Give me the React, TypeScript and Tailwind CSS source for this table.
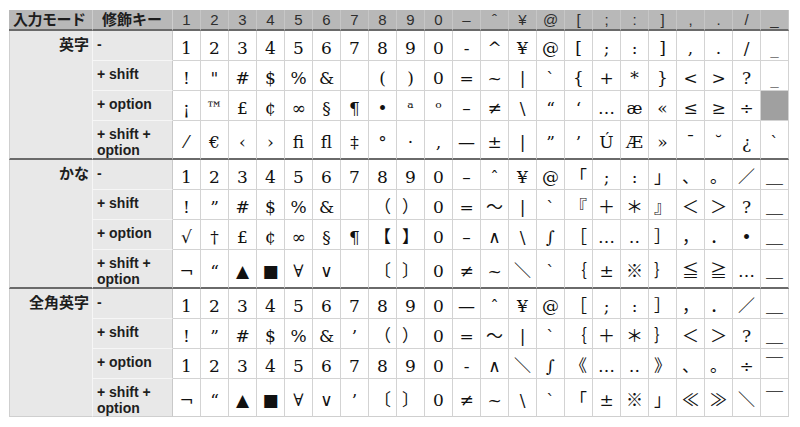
import React from 'react';

const keys = ['1', '2', '3', '4', '5', '6', '7', '8', '9', '0', '–', 'ˆ', '¥', '@', '[', ';', ':', ']', ',', '.', '/', '_'];

const mods = ['-', '+ shift', '+ option', '+ shift +\noption'];

const GRAY = '#gray';

const groups: { mode: string; rows: string[][] }[] = [
  {
    mode: '英字',
    rows: [
      ['1', '2', '3', '4', '5', '6', '7', '8', '9', '0', '-', '^', '¥', '@', '[', ';', ':', ']', ',', '.', '/', '_'],
      ['!', '"', '#', '$', '%', '&', '', '(', ')', '0', '=', '~', '|', '`', '{', '+', '*', '}', '<', '>', '?', '_'],
      ['¡', '™', '£', '¢', '∞', '§', '¶', '•', 'ᵃ', 'ᵒ', '–', '≠', '\\', '“', '‘', '…', 'æ', '«', '≤', '≥', '÷', GRAY],
      ['⁄', '€', '‹', '›', 'ﬁ', 'ﬂ', '‡', '°', '·', '‚', '—', '±', '|', '”', '’', 'Ú', 'Æ', '»', '¯', '˘', '¿', '`'],
    ],
  },
  {
    mode: 'かな',
    rows: [
      ['1', '2', '3', '4', '5', '6', '7', '8', '9', '0', '–', 'ˆ', '¥', '@', '「', ';', ':', '」', '、', '。', '／', '＿'],
      ['!', '”', '#', '$', '%', '&', '', '（', '）', '0', '=', '～', '|', '`', '『', '＋', '＊', '』', '＜', '＞', '?', '＿'],
      ['√', '†', '£', '¢', '∞', '§', '¶', '【', '】', '0', '–', '∧', '\\', '∫', '［', '…', '‥', '］', '，', '．', '•', '＿'],
      ['¬', '“', '▲', '■', '∀', '∨', '', '〔', '〕', '0', '≠', '~', '＼', '`', '｛', '±', '※', '｝', '≦', '≧', '…', '＿'],
    ],
  },
  {
    mode: '全角英字',
    rows: [
      ['1', '2', '3', '4', '5', '6', '7', '8', '9', '0', '—', 'ˆ', '¥', '@', '［', ';', ':', '］', '，', '．', '／', '＿'],
      ['!', '”', '#', '$', '%', '&', '’', '（', '）', '0', '=', '～', '|', '`', '｛', '＋', '＊', '｝', '＜', '＞', '?', '＿'],
      ['1', '2', '3', '4', '5', '6', '7', '8', '9', '0', '-', '∧', '＼', '∫', '《', '…', '‥', '》', '、', '。', '÷', '￣'],
      ['¬', '“', '▲', '■', '∀', '∨', '’', '〔', '〕', '0', '≠', '~', '\\', '`', '「', '±', '※', '」', '≪', '≫', '＼', '￣'],
    ],
  },
];

const sans = "font-['Liberation_Sans','Noto_Sans_CJK_JP',sans-serif]";

export default function App() {
  return (
    <div className="w-[800px] h-[427px] bg-white pt-[10px] pl-[9px]">
      <table className={`w-[780px] table-fixed border-separate border-spacing-0 ${sans}`}>
        <colgroup>
          <col className="w-[84px]" />
          <col className="w-[80px]" />
          {keys.map((_, i) => (
            <col key={i} className="w-[28px]" />
          ))}
        </colgroup>
        <thead>
          <tr>
            <th className="h-[21px] p-0 bg-[#b8b8b8] border-b-2 border-b-[#6a6a6a] border-r border-r-[#cdcdcd] text-[15px] font-bold leading-none text-[#1e1e1e] text-left pl-[4px] tracking-[-0.5px]">
              入力モード
            </th>
            <th className="h-[21px] p-0 bg-[#b8b8b8] border-b-2 border-b-[#6a6a6a] border-r border-r-[#cdcdcd] text-[15px] font-bold leading-none text-[#1e1e1e] text-left pl-[9px]">
              修飾キー
            </th>
            {keys.map((k, i) => (
              <th
                key={i}
                className="h-[21px] p-0 bg-[#b8b8b8] border-b-2 border-b-[#6a6a6a] border-r border-r-[#c6c6c6] text-[15px] font-normal leading-none text-[#2e2e2e] text-center"
              >
                {k}
              </th>
            ))}
          </tr>
        </thead>
        <tbody>
          {groups.map((g, gi) => {
            const lastGroup = gi === groups.length - 1;
            return g.rows.map((row, ri) => {
              const lastRow = ri === 3;
              const bottom = lastRow
                ? lastGroup
                  ? 'border-b border-b-[#cfcfcf]'
                  : 'border-b-2 border-b-[#6a6a6a]'
                : 'border-b border-b-[#d3d3d3]';
              const height = lastRow ? 'h-[38px]' : 'h-[30px]';
              return (
                <tr key={`${gi}-${ri}`}>
                  {ri === 0 && (
                    <td
                      rowSpan={4}
                      className={`p-0 pt-[5px] pr-[3px] align-top text-right bg-[#e8e8e8] border-l border-l-[#cfcfcf] border-r border-r-[#f6f6f6] ${
                        lastGroup ? 'border-b border-b-[#cfcfcf]' : 'border-b-2 border-b-[#6a6a6a]'
                      } text-[15px] font-bold leading-[18px] text-[#1e1e1e]`}
                    >
                      {g.mode}
                    </td>
                  )}
                  <td
                    className={`${height} p-0 pt-[5px] pl-[4px] align-top bg-[#e8e8e8] border-r border-r-[#c9c9c9] ${
                      lastRow ? bottom : 'border-b border-b-[#f6f6f6]'
                    } text-[14px] font-bold leading-[16px] text-[#1e1e1e] whitespace-pre-line`}
                  >
                    {mods[ri]}
                  </td>
                  {row.map((c, ci) =>
                    c === GRAY ? (
                      <td key={ci} className={`${height} p-0 bg-[#a0a0a0] border-r border-r-[#d3d3d3] ${bottom}`} />
                    ) : (
                      <td
                        key={ci}
                        className={`${height} p-0 pt-[4px] bg-white border-r border-r-[#d3d3d3] ${bottom} text-center align-middle whitespace-nowrap overflow-hidden font-['DejaVu_Serif','Noto_Sans_CJK_JP',serif] text-[17px] leading-[22px] text-[#111]`}
                      >
                        {c}
                      </td>
                    )
                  )}
                </tr>
              );
            });
          })}
        </tbody>
      </table>
    </div>
  );
}
